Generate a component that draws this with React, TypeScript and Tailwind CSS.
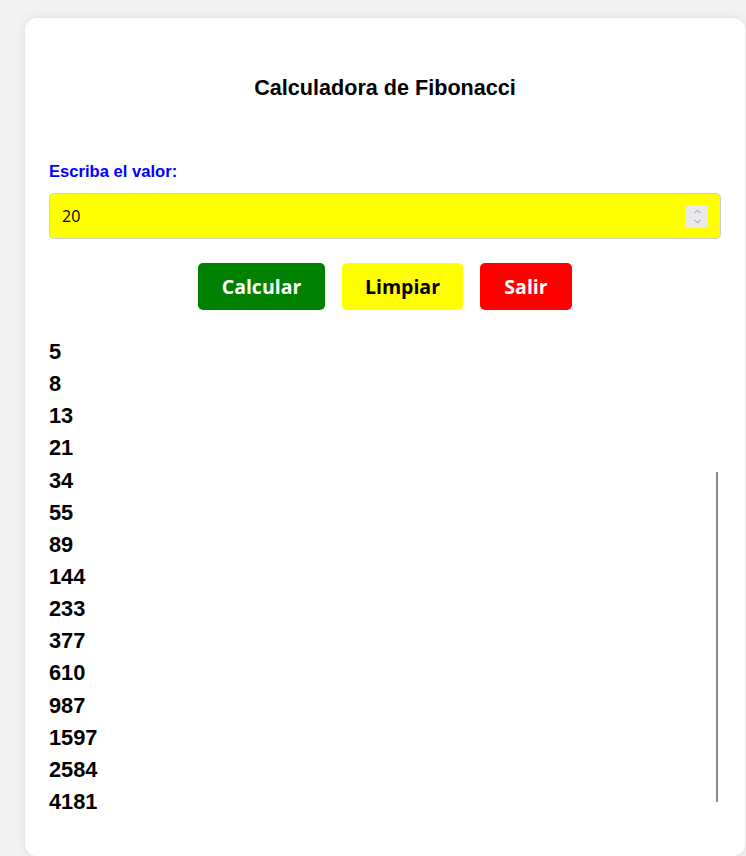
import { ChevronUp, ChevronDown } from 'lucide-react'

const numbers = [5, 8, 13, 21, 34, 55, 89, 144, 233, 377, 610, 987, 1597, 2584, 4181]

export default function App() {
    return (
        <div className="min-h-[856px] bg-[#f3f3f3] pt-[18px] pl-[25px] overflow-hidden">
            <div className="relative w-[720px] h-[838px] bg-white rounded-[12px] shadow-[0_0_10px_rgba(0,0,0,0.1)] px-[24px] pt-[56px] font-['Liberation_Sans',Arial,sans-serif]">
                <h2 className="text-center text-[21.6px] leading-[28px] font-bold text-black">
                    Calculadora de Fibonacci
                </h2>

                <label className="block mt-[60px] text-[16.6px] leading-[20px] font-bold text-[#0000ff]">
                    Escriba el valor:
                </label>

                <div className="mt-[11px] h-[46px] flex items-center bg-[#ffff00] border border-[#cccccc] rounded-[5px] pl-[12px] pr-[12px]">
                    <input
                        type="text"
                        defaultValue="20"
                        className="flex-1 bg-transparent outline-none text-[16px] text-black font-['Open_Sans','Noto_Sans',sans-serif]"
                    />
                    <div className="w-[22px] h-[23px] bg-[#e9e9ed] flex flex-col items-center justify-center text-[#7a7a7a]">
                        <ChevronUp className="w-[11px] h-[11px] -mb-[1px]" strokeWidth={1.75} />
                        <ChevronDown className="w-[11px] h-[11px]" strokeWidth={1.75} />
                    </div>
                </div>

                <div className="mt-[24px] flex justify-center gap-[17px] font-['Open_Sans','Noto_Sans',sans-serif]">
                    <button className="w-[127px] h-[47px] rounded-[5px] bg-[#008000] text-white text-[19.5px] font-bold">
                        Calcular
                    </button>
                    <button className="w-[121px] h-[47px] rounded-[5px] bg-[#ffff00] text-black text-[19.5px] font-bold">
                        Limpiar
                    </button>
                    <button className="w-[92px] h-[47px] rounded-[5px] bg-[#ff0000] text-white text-[19.5px] font-bold">
                        Salir
                    </button>
                </div>

                <ul className="mt-[26px]">
                    {numbers.map((n) => (
                        <li key={n} className="text-[21.8px] leading-[32.14px] font-bold text-black">
                            {n}
                        </li>
                    ))}
                </ul>

                <div className="absolute left-[691px] top-[454px] w-[2px] h-[330px] bg-[#8a8a8a]" />
            </div>
        </div>
    )
}
